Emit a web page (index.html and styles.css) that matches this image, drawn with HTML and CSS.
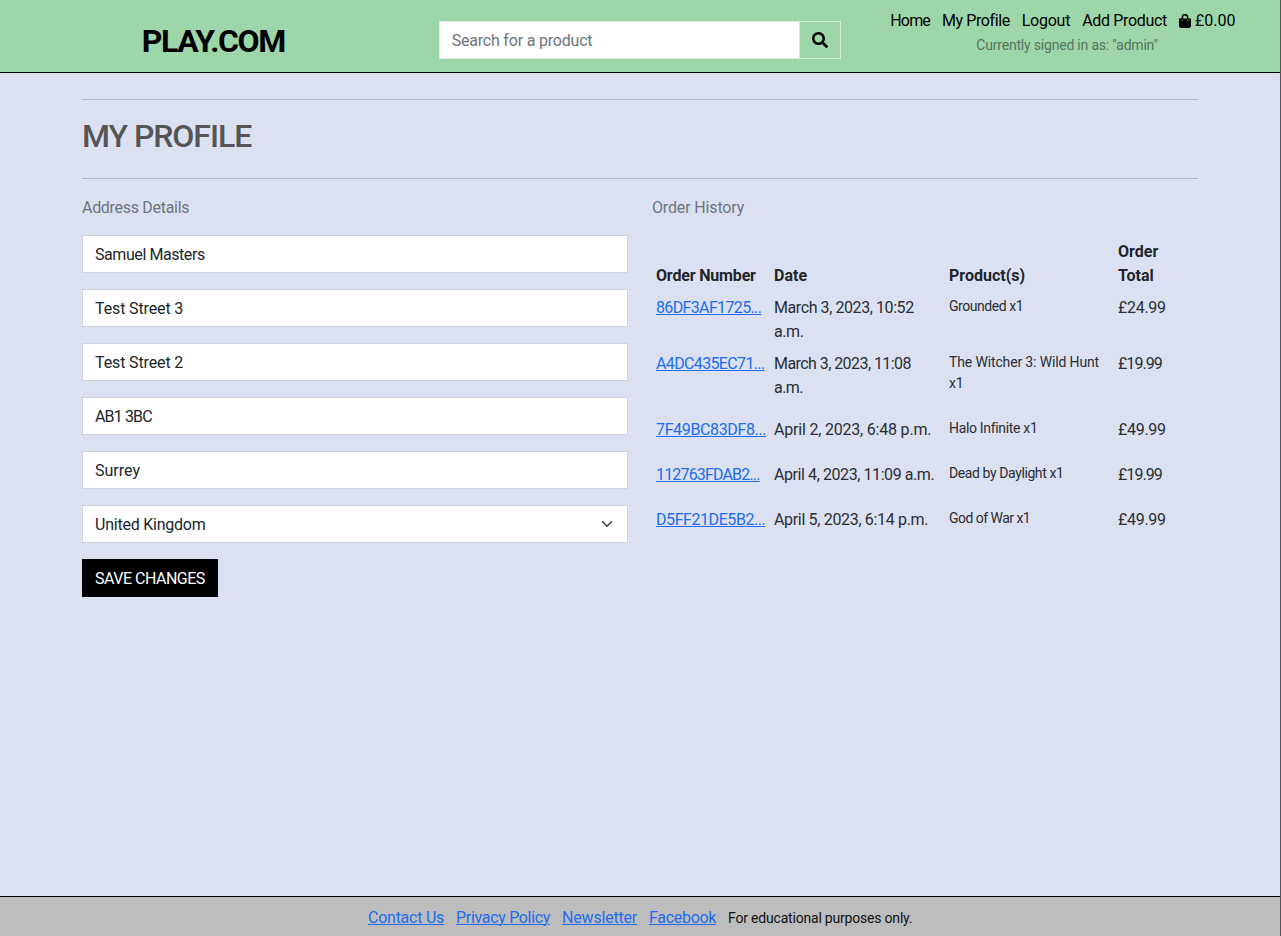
FILE: index.html
```html
<!DOCTYPE html>
<html lang="en">
<head>
<meta charset="utf-8">
<title>My Profile - Play.com</title>
<link rel="stylesheet" href="styles.css">
</head>
<body>
<header class="header">
  <a class="logo" href="#">PLAY.COM</a>
  <form class="search">
    <input class="search-input" type="text" placeholder="Search for a product">
    <button class="search-button" type="button" aria-label="Search">
      <svg width="16" height="16" viewBox="0 0 512 512"><path d="M505 442.7L405.3 343c-4.500-4.500-10.600-7-17-7H372c27.600-35.300 44-79.700 44-128C416 93.100 322.900 0 208 0S0 93.100 0 208s93.100 208 208 208c48.300 0 92.700-16.400 128-44v16.300c0 6.400 2.500 12.500 7 17l99.700 99.700c9.400 9.400 24.600 9.400 33.900 0l28.300-28.300c9.400-9.400 9.400-24.600.1-34zM208 336c-70.700 0-128-57.200-128-128 0-70.700 57.200-128 128-128 70.700 0 128 57.200 128 128 0 70.700-57.200 128-128 128z"/></svg>
    </button>
  </form>
  <div class="account">
    <nav class="nav">
      <a class="nav-home" href="#">Home</a>
      <a class="nav-profile" href="#">My Profile</a>
      <a class="nav-logout" href="#">Logout</a>
      <a class="nav-add" href="#">Add Product</a>
      <a class="basket" href="#"><svg width="12" height="14" viewBox="0 0 12 14"><path d="M2.600 4.500V3.500a3.400 3.400 0 0 1 6.800 0v1H12v7.300A2.200 2.200 0 0 1 9.800 14H2.200A2.200 2.200 0 0 1 0 11.800V4.500zM4.100 4.500h3.800v-1a1.900 1.900 0 0 0-3.800 0zM3.300 5.700a.6.6 0 1 0 0 1.200.6.6 0 0 0 0-1.200zM8.700 5.700a.6.6 0 1 0 0 1.200.6.6 0 0 0 0-1.200z" fill-rule="evenodd"/></svg><span>£0.00</span></a>
    </nav>
    <p class="signed-in">Currently signed in as: "admin"</p>
  </div>
</header>
<main class="main">
  <div class="title-bar"><h2 class="title">MY PROFILE</h2></div>
  <div class="columns">
    <section>
      <p class="section-label address-label">Address Details</p>
      <form class="profile-form">
        <input class="field field-name" type="text" value="Samuel Masters">
        <input class="field field-street" type="text" value="Test Street 3">
        <input class="field field-street" type="text" value="Test Street 2">
        <input class="field field-postcode" type="text" value="AB1 3BC">
        <input class="field" type="text" value="Surrey">
        <div class="field select"><span class="select-value">United Kingdom</span>
          <svg width="16" height="12" viewBox="0 0 16 16"><path d="M2 5l6 6 6-6" fill="none" stroke="#343a40" stroke-width="2" stroke-linecap="round" stroke-linejoin="round"/></svg>
        </div>
        <button class="save" type="button">SAVE CHANGES</button>
      </form>
    </section>
    <section>
      <p class="section-label history-label">Order History</p>
      <table class="orders">
        <colgroup><col class="col-number"><col class="col-date"><col class="col-products"><col class="col-total"></colgroup>
        <thead><tr><th class="th-number">Order Number</th><th>Date</th><th>Product(s)</th><th>Order<br>Total</th></tr></thead>
        <tbody>
          <tr><td><a class="num-1" href="#">86DF3AF1725...</a></td><td class="date-1">March 3, 2023, 10:52 a.m.</td><td><p class="product product-1">Grounded x1</p></td><td class="total">£24.99</td></tr>
          <tr><td><a class="num-2" href="#">A4DC435EC71...</a></td><td class="date-2">March 3, 2023, 11:08 a.m.</td><td><p class="product product-2">The Witcher 3: Wild Hunt x1</p></td><td class="total-narrow">£19.99</td></tr>
          <tr><td><a class="num-3" href="#">7F49BC83DF8...</a></td><td class="date-3">April 2, 2023, 6:48 p.m.</td><td><p class="product product-3">Halo Infinite x1</p></td><td class="total">£49.99</td></tr>
          <tr><td><a class="num-4" href="#">112763FDAB2...</a></td><td class="date-4">April 4, 2023, 11:09 a.m.</td><td><p class="product product-4">Dead by Daylight x1</p></td><td class="total-narrow">£19.99</td></tr>
          <tr><td><a class="num-5" href="#">D5FF21DE5B2...</a></td><td class="date-5">April 5, 2023, 6:14 p.m.</td><td><p class="product product-5">God of War x1</p></td><td class="total">£49.99</td></tr>
        </tbody>
      </table>
    </section>
  </div>
</main>
<footer class="footer">
  <a class="contact" href="#">Contact Us</a>
  <a class="privacy" href="#">Privacy Policy</a>
  <a class="newsletter" href="#">Newsletter</a>
  <a class="facebook" href="#">Facebook</a>
  <small class="note">For educational purposes only.</small>
</footer>
</body>
</html>
```
FILE: styles.css
```css
* { box-sizing: border-box; }
body {
  margin: 0;
  height: 936px;
  display: flex;
  flex-direction: column;
  border-right: 1px solid #55565c;
  background: #dce1f2;
  color: #2a2e33;
  font: 400 16px/24px Roboto, "Liberation Sans", sans-serif;
}
p, h2 { margin: 0; }
input, button { font: inherit; border-radius: 0; }

/* Header */
.header {
  height: 73px;
  display: grid;
  grid-template-columns: repeat(3, 1fr);
  background: #9dd7a9;
  border-bottom: 1px solid #000;
}
.header a { color: #000; text-decoration: none; }
.logo { justify-self: center; padding-top: 22px; font-size: 32px; line-height: 38px; font-weight: 700; letter-spacing: -1.4px; }
.search { display: flex; height: 38px; margin: 21px 12px 0; }
.search-input { flex: 1; min-width: 0; padding: 2px 12px 0; border: 1px solid #dee8e2; background: #fff; letter-spacing: -.2px; }
.search-input::placeholder { color: #6c757d; opacity: 1; }
.search-button { width: 42px; margin-left: -1px; padding: 0; border: 1px solid #d2ecd8; background: #9dd7a9; display: flex; align-items: center; justify-content: center; }
.account { padding-top: 9px; }
.nav { display: flex; margin-left: 37px; gap: 12px; white-space: nowrap; }
.nav-home { letter-spacing: -.87px; }
.nav-profile { letter-spacing: -.4px; }
.nav-logout { letter-spacing: -.25px; }
.nav-add { letter-spacing: -.32px; }
.basket { display: flex; align-items: center; gap: 4px; }
.signed-in { margin-left: 123px; font-size: 14px; line-height: 21px; padding-top: 2px; color: #567560; white-space: nowrap; letter-spacing: -.2px; }

/* Profile */
.main { flex: 1; padding: 26px 82px 0; }
.title-bar { height: 80px; padding-top: 17px; border-top: 1px solid #b4b9c9; border-bottom: 1px solid #b4b9c9; }
.title { font-size: 32px; line-height: 38px; font-weight: 500; color: #555; letter-spacing: -1.05px; }
.columns { display: grid; grid-template-columns: 1fr 1fr; gap: 24px; padding-top: 17px; }
.section-label { color: #6c757d; margin-bottom: 15px; }
.address-label { letter-spacing: -.3px; }
.history-label { letter-spacing: -.15px; }
.profile-form { display: flex; flex-direction: column; align-items: flex-start; gap: 16px; }
.field { width: 100%; height: 38px; padding: 0 12px; border: 1px solid #ced4da; background: #fff; color: #212529; }
.field-name { letter-spacing: -.43px; }
.field-street { letter-spacing: -.13px; }
.field-postcode { letter-spacing: -.85px; }
.select { display: flex; align-items: center; justify-content: space-between; }
.select-value { padding-top: 2px; letter-spacing: -.23px; }
.save { height: 38px; padding: 2px 13px 0; border: 0; background: #000; color: #fff; letter-spacing: -.5px; }

/* Orders */
.orders { width: 546px; margin-top: 16px; table-layout: fixed; border-collapse: collapse; }
.col-number { width: 118px; }
.col-date { width: 175px; }
.col-products { width: 169px; }
.orders th, .orders td { padding: 4px; text-align: left; vertical-align: top; }
.orders th { font-weight: 700; vertical-align: bottom; color: #212529; }
.orders .th-number { letter-spacing: -.17px; }
.orders a, .footer a { color: #216cee; text-underline-offset: 1px; text-decoration-thickness: 1px; }
.orders a { white-space: nowrap; }
.num-1, .num-2 { letter-spacing: -.64px; }
.num-3 { letter-spacing: -.36px; }
.num-4 { letter-spacing: -.83px; }
.num-5 { letter-spacing: -.43px; }
.date-1 { letter-spacing: -.42px; }
.date-2 { letter-spacing: -.56px; }
.date-3 { letter-spacing: -.2px; }
.date-4 { letter-spacing: -.42px; }
.date-5 { letter-spacing: -.33px; }
.product { font-size: 14px; line-height: 21px; margin-bottom: 16px; }
.product-1 { letter-spacing: -.45px; }
.product-2 { letter-spacing: -.14px; }
.product-3 { letter-spacing: -.33px; }
.product-4 { letter-spacing: -.4px; }
.product-5 { letter-spacing: -.53px; }
.total { letter-spacing: -.3px; }
.total-narrow { letter-spacing: -.95px; }

/* Footer */
.footer { height: 40px; display: flex; align-items: center; gap: 12px; padding: 2px 0 0 368px; border-top: 1px solid #000; background: #bdbdbd; white-space: nowrap; }
.contact { letter-spacing: -.25px; }
.privacy { letter-spacing: -.32px; }
.newsletter { letter-spacing: -.2px; }
.facebook { letter-spacing: -.3px; }
.note { font-size: 14px; color: #111; letter-spacing: -.2px; }
```
